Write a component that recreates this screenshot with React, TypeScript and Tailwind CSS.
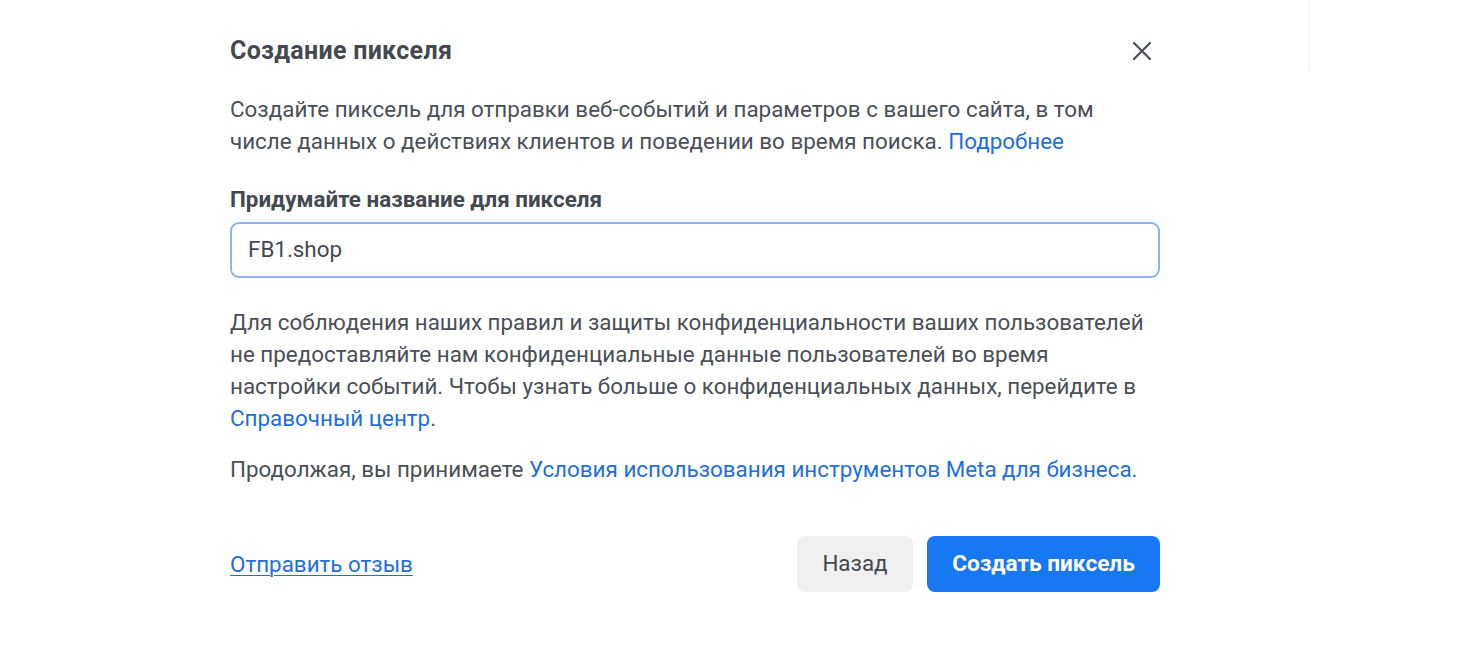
export default function App() {
  return (
    <div className="relative h-[653px] w-full overflow-hidden bg-white font-['Roboto',sans-serif] text-[#4b4f56]">
      <div className="absolute left-[1309px] top-0 h-[70px] w-px bg-[#f3f3f3]" />
      <div className="ml-[230px] w-[930px] pt-[37px]">
        <div className="flex items-center justify-between">
          <h1 className="text-[25px] font-bold leading-[28px] tracking-[0.3px] text-[#444950]">
            Создание пикселя
          </h1>
          <button type="button" className="mr-[8px] text-[#4b4f56]">
            <svg width="20" height="20" viewBox="0 0 20 20" fill="none" stroke="currentColor" strokeWidth="2.2" strokeLinecap="round">
              <path d="M2 2 18 18M18 2 2 18" />
            </svg>
          </button>
        </div>

        <p className="mt-[28px] whitespace-nowrap text-[22.4px] leading-[32px]">
          Создайте пиксель для отправки веб-событий и параметров с вашего сайта, в том
          <br />
          числе данных о действиях клиентов и поведении во время поиска.{" "}
          <a className="text-[#216fdb]">Подробнее</a>
        </p>

        <label className="mt-[28px] block text-[22.4px] font-bold leading-[28px] text-[#444950]">
          Придумайте название для пикселя
        </label>
        <div className="mt-[9px] flex h-[56px] items-center rounded-[9px] border-2 border-[#8ab4f0] px-[16px]">
          <span className="text-[22.4px] text-[#444950]">FB1.shop</span>
        </div>

        <p className="mt-[28px] whitespace-nowrap text-[22.4px] leading-[32px]">
          Для соблюдения наших правил и защиты конфиденциальности ваших пользователей
          <br />
          не предоставляйте нам конфиденциальные данные пользователей во время
          <br />
          настройки событий. Чтобы узнать больше о конфиденциальных данных, перейдите в
          <br />
          <a className="text-[#216fdb]">Справочный центр</a>.
        </p>

        <p className="mt-[19px] whitespace-nowrap text-[22.4px] leading-[32px]">
          Продолжая, вы принимаете{" "}
          <a className="text-[#216fdb]">Условия использования инструментов Meta для бизнеса.</a>
        </p>

        <div className="mt-[51px] flex items-center justify-between">
          <a className="text-[22.4px] leading-[28px] text-[#216fdb] underline decoration-1 underline-offset-[3px]">
            Отправить отзыв
          </a>
          <div className="flex gap-[14px]">
            <button
              type="button"
              className="h-[56px] w-[116px] rounded-[8px] bg-[#f0f0f0] text-[22.4px] font-normal text-[#444950]"
            >
              Назад
            </button>
            <button
              type="button"
              className="h-[56px] w-[233px] rounded-[8px] bg-[#1877f2] text-[22.6px] font-bold text-white"
            >
              Создать пиксель
            </button>
          </div>
        </div>
      </div>
    </div>
  );
}
